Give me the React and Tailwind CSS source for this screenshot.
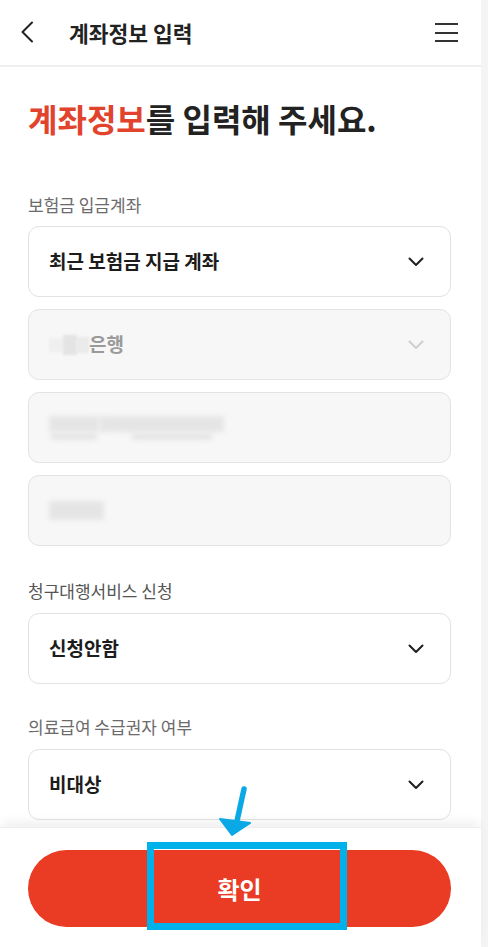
import React from 'react';

const font = { fontFamily: '"Noto Sans CJK KR", "Noto Sans", sans-serif' };

const Chevron = ({ light }) => (
  <svg width="16" height="10" viewBox="0 0 16 10" fill="none">
    <path
      d="M1.5 1.5L8 8L14.5 1.5"
      stroke={light ? '#cfcfcf' : '#1f1f1f'}
      strokeWidth="2"
      strokeLinecap="round"
      strokeLinejoin="round"
    />
  </svg>
);

const SelectBox = ({ children, disabled, chevron = true }) => (
  <div
    className={`h-[71px] rounded-[11px] border flex items-center justify-between pl-[20px] pr-[26px] ${
      disabled ? 'bg-[#f7f7f7] border-[#e3e3e3]' : 'bg-white border-[#e2e2e2]'
    }`}
  >
    <div className="flex items-center">{children}</div>
    {chevron && <Chevron light={disabled} />}
  </div>
);

const Blur = ({ w, h }) => (
  <div className={`${w} ${h} bg-[#e5e5e5] blur-[2.5px] rounded-[2px]`} />
);

export default function App() {
  return (
    <div className="relative w-[488px] h-[947px] overflow-hidden bg-white flex" style={font}>
      {/* main column */}
      <div className="w-[481px] h-full flex flex-col">
        {/* Header */}
        <header className="h-[67px] shrink-0 border-b-2 border-[#efefef] flex items-center pl-[20px] pr-[23px]">
          <svg width="14" height="22" viewBox="0 0 14 22" fill="none" className="mt-[-2px]">
            <path d="M12 1.5L2.5 11L12 20.5" stroke="#222" strokeWidth="2" strokeLinecap="round" strokeLinejoin="round" />
          </svg>
          <h1 className="ml-[35px] text-[21.5px] font-bold text-[#222] leading-none">
            계좌정보 입력
          </h1>
          <div className="ml-auto flex flex-col gap-[6.5px] w-[23px]">
            <span className="h-[2px] bg-[#333]" />
            <span className="h-[2px] bg-[#333]" />
            <span className="h-[2px] bg-[#333]" />
          </div>
        </header>

        {/* Content */}
        <main className="flex-1 overflow-hidden pl-[28px] pr-[30px]">
          <h2 className="mt-[29px] text-[32px] leading-[44px] font-bold text-[#222]">
            <span className="text-[#e2432d]">계좌정보</span>를 입력해 주세요.
          </h2>

          <p className="mt-[53px] text-[17px] leading-[24px] text-[#6b6b6b]">보험금 입금계좌</p>
          <div className="mt-[9px] flex flex-col gap-[12px]">
            <SelectBox>
              <span className="text-[19px] font-bold text-[#1c1c1c]">최근 보험금 지급 계좌</span>
            </SelectBox>
            <SelectBox disabled>
              <div className="w-[40px] h-[20px] flex">
                <div className="w-[14px] h-[14px] mt-[3px] bg-[#efefef] blur-[1px]" />
                <div className="w-[14px] h-[20px] bg-[#e4e4e4] blur-[1px]" />
                <div className="w-[12px] h-[16px] mt-[2px] bg-[#eaeaea] blur-[1px]" />
              </div>
              <span className="text-[19px] font-bold text-[#9a9a9a]">은행</span>
            </SelectBox>
            <SelectBox disabled chevron={false}>
              <div className="flex flex-col gap-[1px]">
                <div className="flex">
                  <Blur w="w-[50px]" h="h-[16px]" />
                  <Blur w="w-[125px]" h="h-[16px]" />
                </div>
                <div className="flex gap-[35px] pl-[2px]">
                  <Blur w="w-[46px]" h="h-[7px]" />
                  <Blur w="w-[80px]" h="h-[7px]" />
                </div>
              </div>
            </SelectBox>
            <SelectBox disabled chevron={false}>
              <Blur w="w-[55px]" h="h-[19px]" />
            </SelectBox>
          </div>

          <p className="mt-[33px] text-[17px] leading-[24px] text-[#555]">청구대행서비스 신청</p>
          <div className="mt-[10px]">
            <SelectBox>
              <span className="text-[19px] font-bold text-[#1c1c1c]">신청안함</span>
            </SelectBox>
          </div>

          <p className="mt-[31px] text-[17px] leading-[24px] text-[#6b6b6b]">의료급여 수급권자 여부</p>
          <div className="mt-[10px]">
            <SelectBox>
              <span className="text-[19px] font-bold text-[#1c1c1c]">비대상</span>
            </SelectBox>
          </div>
        </main>

        {/* Footer */}
        <footer className="relative shrink-0 bg-white pt-[22px] pb-[20px] pl-[28px] pr-[30px] shadow-[0_-8px_10px_-2px_rgba(0,0,0,0.06)] border-t border-[#eeeeee]">
          <button className="w-full h-[77px] rounded-full bg-[#ea3b24] text-white text-[24px] font-bold flex items-center justify-center">
            확인
          </button>
          <div className="absolute left-[147px] top-[14px] w-[200px] h-[88px] border-[7px] border-[#00b1ea]" />
        </footer>
      </div>

      {/* scrollbar strip */}
      <div className="w-[7px] h-full bg-[#f4f4f4]" />

      {/* annotation arrow */}
      <svg className="absolute left-[214px] top-[784px]" width="44" height="56" viewBox="0 0 44 56" fill="none">
        <path d="M30 5L23 37" stroke="#0aa9e6" strokeWidth="5.5" strokeLinecap="round" />
        <path d="M18 51L6 35L36 39Z" fill="#0aa9e6" stroke="#0aa9e6" strokeWidth="2" strokeLinejoin="round" />
      </svg>
    </div>
  );
}
